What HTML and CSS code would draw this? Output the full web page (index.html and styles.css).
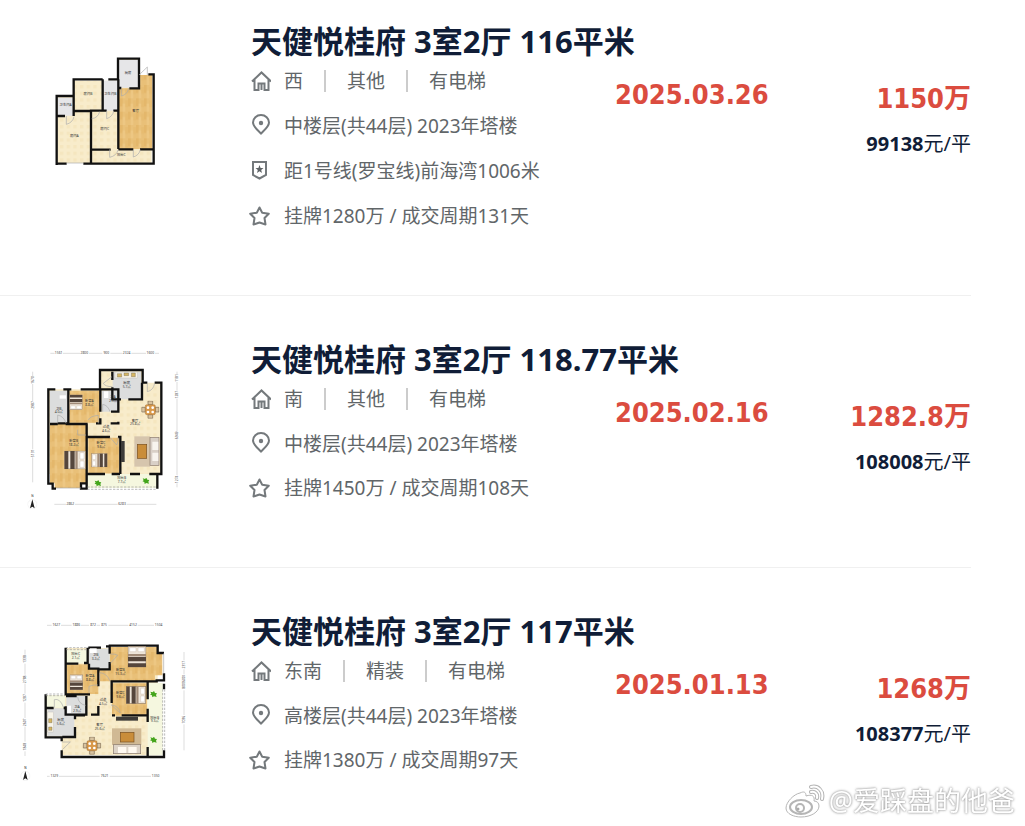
FILE: index.html
```html
<!DOCTYPE html>
<html lang="zh-CN">
<head>
    <meta charset="UTF-8">
    <meta name="viewport" content="width=device-width, initial-scale=1.0">
    <title>天健悦桂府 成交记录</title>
    <link rel="stylesheet" href="styles.css">
</head>
<body>
    <!-- shared icons and floor plan furniture -->
    <svg class="defs" width="0" height="0" aria-hidden="true">
        <defs>
            <pattern id="wood" width="24" height="40" patternUnits="userSpaceOnUse">
                <rect width="24" height="40" fill="#e9c078"/>
                <rect width="8" height="24" fill="#e4b76b"/>
                <rect x="8" y="16" width="8" height="24" fill="#edc783"/>
                <rect x="16" y="6" width="8" height="20" fill="#e7bc71"/>
            </pattern>
            <pattern id="tile" width="20" height="20" patternUnits="userSpaceOnUse">
                <rect width="20" height="20" fill="#f8eccb"/>
                <rect width="10" height="10" fill="#f5e6bf"/>
            </pattern>
            <symbol id="home" viewBox="0 0 22 22">
                <path d="M3 11.5 12.5 2.5 22 11.5M5.5 9.5V20H9.5V13.5H15.5V20H19.5V9.5M12.5 14V20" fill="none" stroke="#74797c" stroke-width="2"/>
            </symbol>
            <symbol id="pin" viewBox="0 0 22 22">
                <path d="M12 19.5C8 15.5 4 12.5 4 8.5A8 7.5 0 0 1 20 8.5C20 12.5 16 15.5 12 19.5Z" fill="none" stroke="#74797c" stroke-width="2"/>
                <circle cx="12" cy="9" r="2.2" fill="#74797c"/>
            </symbol>
            <symbol id="metro" viewBox="0 0 22 22">
                <path d="M4 3H17V16L10.500 19.500 4 16Z" fill="none" stroke="#74797c" stroke-width="2"/>
                <path d="M10.500 6 11.600 9H14.500L12.200 10.900 13 14 10.500 12.200 8 14 8.800 10.900 6.500 9H9.400Z" fill="#5d6265"/>
            </symbol>
            <symbol id="star" viewBox="0 0 22 22">
                <path d="M10.500 3.500 13.200 8.700 19.800 9.700 15.500 14 16.500 20.500 10.500 18.500 4.500 20.500 5.500 14 1.200 9.700 7.800 8.700Z" fill="none" stroke="#74797c" stroke-width="2" stroke-linejoin="round"/>
            </symbol>
            <symbol id="bed" viewBox="0 0 64 56">
                <rect x="1" y="1" width="62" height="54" fill="#eee5d9" stroke="#8c7864" stroke-width="2"/>
                <path d="M1 1H12V55H1ZM18 1H31V55H18Z" fill="#55463c"/>
                <rect x="33" y="1" width="7" height="54" fill="#a18b78"/>
                <path d="M47 6H59V25H47ZM47 31H59V50H47Z" fill="#fff" stroke="#bbaa99"/>
            </symbol>
            <symbol id="table" viewBox="0 0 54 54">
                <path d="M20 1H34V12H20ZM20 42H34V53H20ZM1 20H12V34H1ZM42 20H53V34H42Z" fill="#d8c3a0" stroke="#7a6852" stroke-width="2"/>
                <rect x="12" y="12" width="30" height="30" rx="4" fill="#d9994a" stroke="#8b5c28"/>
                <circle cx="20" cy="21" r="4" fill="#fff"/><circle cx="34" cy="21" r="4" fill="#fff"/>
                <circle cx="20" cy="34" r="4" fill="#fff"/><circle cx="34" cy="34" r="4" fill="#fff"/>
            </symbol>
            <symbol id="plant" viewBox="0 0 22 20">
                <path d="M1 2 8 4 12 0 15 6 21 7 18 12 20 18 12 16 7 19 6 13 0 11 4 8Z" fill="#44a51c"/>
            </symbol>
            <symbol id="north" viewBox="0 0 30 45">
                <text x="15" y="9" font-size="9" text-anchor="middle">N</text>
                <circle cx="15" cy="30" r="14" fill="none" stroke="#ddd"/>
                <path d="M15 15 22 42 15 37 8 42Z" fill="#222"/>
            </symbol>
        </defs>
    </svg>

    <main class="list">
        <article class="item">
            <svg class="plan" viewBox="-75 -69 540 525" role="img" aria-label="户型图">
                <path d="M52 155H102V107H186V107H237V42H297V95H335V354H52Z" fill="url(#tile)"/>
                <path d="M237 130H295V90H337V312H237Z" fill="url(#wood)"/>
                <path d="M237 45H295V128H237ZM188 107H236V197H188ZM54 158H101V212H54Z" fill="#e6e6e8"/>
                <path class="wall" d="M50 360V153H101V103H188M205 103H234V41H297V130H268M80 356H47M130 356H341V88H325M235 103V312M235 129H244M188 103V197H153V312M50 213H75M101 153V213M101 198H153M153 354V314H212M235 313H280M300 313H338M188 197H200M220 197H235"/>
                <path class="door" d="M297 90 322 66V90M244 130V153Q262 149 266 130M200 198V221Q218 215 221 198M155 221Q174 219 179 200M79 213V238Q98 233 102 215M209 313V337Q230 332 234 315M280 314V336Q297 331 301 314M80 354H130"/>
                <g class="label">
                    <text x="264" y="86">厨房</text><text x="144" y="150">房间B</text>
                    <text x="211" y="150">卫生间B</text><text x="77" y="183">卫生间A</text>
                    <text x="287" y="202">客厅</text><text x="194" y="254">房间C</text>
                    <text x="103" y="275">房间A</text><text x="244" y="333">阳台C</text>
                </g>
            </svg>
            <div class="body">
                <h2 class="title">天健悦桂府 3室2厅 116平米</h2>
                <div class="row">
                    <ul class="info">
                        <li><svg class="icon"><use href="#home"/></svg><span class="attrs"><span>西</span><span>其他</span><span>有电梯</span></span></li>
                        <li><svg class="icon"><use href="#pin"/></svg>中楼层(共44层) 2023年塔楼</li>
                        <li class="metro"><svg class="icon"><use href="#metro"/></svg>距1号线(罗宝线)前海湾1006米</li>
                        <li><svg class="icon"><use href="#star"/></svg>挂牌1280万 / 成交周期131天</li>
                    </ul>
                    <div class="deal">
                        <time class="date" datetime="2025-03-26">2025.03.26</time>
                        <div class="price">
                            <div class="total">1150万</div>
                            <div class="unit"><b>99138</b>元/平</div>
                        </div>
                    </div>
                </div>
            </div>
        </article>

        <article class="item">
            <svg class="plan" viewBox="-15 0 540 525" role="img" aria-label="户型图">
                <path d="M86 148H238V90H368V128H423V402H86Z" fill="url(#tile)"/>
                <path d="M202 402H412V444H202Z" fill="#f5f7df"/>
                <path d="M148 152H240V248H148ZM90 252H200V430H183V444H104V430H90ZM205 293H297V400H205Z" fill="url(#wood)"/>
                <path d="M90 152H145V250H90ZM278 95H363V178H278ZM245 152H293V215H245Z" fill="#dcdddd"/>
                <path class="wall" d="M106 148H85V431H98V446H108M130 148H154M145 148V250H112M90 252H113M137 252H203M182 148H240V90H368V128H382M404 128H424V402H412M238 148H295V215H273M277 95V120M277 142V178H303M325 178H366V128M241 150V215M241 235V250H228M295 245V250H272M200 252V446H183V430H198M200 291H270M294 291H301V402M200 402H255M275 402H300M330 402H360M388 402H412V446"/>
                <path class="dash" d="M202 441H410M202 448H410"/>
                <path class="door" d="M382 130V155Q400 151 404 130M250 130 276 110M250 130Q255 140 277 140M248 215V193Q264 196 270 215M113 250V225Q132 229 138 250M205 240Q210 228 235 226V250M270 292 290 315Q296 305 294 292M173 269V285H198M108 444H183"/>
                <rect x="285" y="96" width="68" height="18" fill="#f8f4e8" stroke="#aaa"/>
                <path d="M292 101H305V111H292ZM312 99H326V107H312ZM334 99H346V110H334Z" fill="#d6b663" stroke="#555"/>
                <rect x="119" y="166" width="19" height="10" fill="#fff"/><rect x="252" y="154" width="13" height="20" fill="#fff"/>
                <use href="#bed" transform="rotate(90 169 187)" x="134" y="168" width="70" height="40"/>
                <use href="#bed" x="132" y="332" width="66" height="56"/>
                <use href="#bed" transform="rotate(180 238 362)" x="205" y="342" width="66" height="42"/>
                <use href="#table" x="364" y="182" width="54" height="54"/>
                <rect x="343" y="289" width="47" height="91" fill="#d6c5ad"/><rect x="352" y="313" width="28" height="42" fill="#c98d3a" stroke="#785022" stroke-width="2"/>
                <rect x="390" y="292" width="27" height="84" fill="#d9d0c7" stroke="#89796c" stroke-width="2"/><path d="M397 305H415V330H397ZM397 338H415V363H397Z" fill="#f8f4ee"/>
                <rect x="303" y="303" width="11" height="63" fill="#3e3c39"/>
                <use href="#plant" x="223" y="420" width="22" height="20"/><use href="#plant" x="367" y="413" width="22" height="20"/>
                <g class="label">
                    <text x="116" y="209">卫B</text><text x="116" y="219">4.0㎡</text>
                    <text x="208" y="187">卧室A</text><text x="208" y="197">8.8㎡</text>
                    <text x="320" y="132">厨房</text><text x="320" y="143">5.7㎡</text>
                    <text x="279" y="174">卫A</text><text x="279" y="185">2.9㎡</text>
                    <text x="345" y="245">客厅</text><text x="345" y="256">25.8㎡</text>
                    <text x="258" y="265">过道</text><text x="258" y="275">4.6㎡</text>
                    <text x="161" y="307">卧室B</text><text x="161" y="318">18.2㎡</text>
                    <text x="243" y="313">卧室C</text><text x="243" y="323">9.6㎡</text>
                    <text x="305" y="418">阳台B</text><text x="305" y="429">7.7㎡</text>
                </g>
                <path class="measure" d="M91 40H104M129 40H180M207 40H247M271 40H307M334 40H378M405 40H417M38 95V108M38 132V183M38 207V328M38 352V427M471 95V102M471 126V152M471 176V274M471 298V405M471 430V442M103 493H138M165 493H293M320 493H409"/>
                <g class="size">
                    <text x="116" y="43">1561</text><text x="193" y="43">2800</text><text x="259" y="43">900</text><text x="320" y="43">2324</text><text x="391" y="43">1600</text>
                    <text x="151" y="496">2862</text><text x="306" y="496">6283</text>
                    <text transform="translate(41 120) rotate(-90)">1670</text><text transform="translate(41 195) rotate(-90)">2987</text><text transform="translate(41 340) rotate(-90)">5131</text>
                    <text transform="translate(474 114) rotate(-90)">1181</text><text transform="translate(474 164) rotate(-90)">1287</text><text transform="translate(474 286) rotate(-90)">6949</text><text transform="translate(474 418) rotate(-90)">1274</text>
                </g>
                <use href="#north" x="22" y="463" width="30" height="45"/>
            </svg>
            <div class="body">
                <h2 class="title">天健悦桂府 3室2厅 118.77平米</h2>
                <div class="row">
                    <ul class="info">
                        <li><svg class="icon"><use href="#home"/></svg><span class="attrs"><span>南</span><span>其他</span><span>有电梯</span></span></li>
                        <li><svg class="icon"><use href="#pin"/></svg>中楼层(共44层) 2023年塔楼</li>
                        <li><svg class="icon"><use href="#star"/></svg>挂牌1450万 / 成交周期108天</li>
                    </ul>
                    <div class="deal">
                        <time class="date" datetime="2025-02-16">2025.02.16</time>
                        <div class="price">
                            <div class="total">1282.8万</div>
                            <div class="unit"><b>108008</b>元/平</div>
                        </div>
                    </div>
                </div>
            </div>
        </article>

        <article class="item">
            <svg class="plan" viewBox="0 0 540 525" role="img" aria-label="户型图">
                <path d="M152 108H428V430H140V375H95V250H152Z" fill="url(#tile)"/>
                <path d="M398 213H443V430H398ZM153 113H217V154H153ZM92 250H150V287H92Z" fill="#f5f7df"/>
                <path d="M285 105H428V124H442V190H420V208H252V175H285ZM155 157H250V246H155ZM291 214H396V311H291Z" fill="url(#wood)"/>
                <path d="M221 110H284V170H221ZM154 252H213V307H154ZM97 289H178V373H97Z" fill="#dcdddd"/>
                <path class="wall" d="M152 107V247H225M218 107V153H207M152 155H190M220 107H258M273 103H285M281 101H428V123H447M447 184V205H425V208H290V273M284 103V125M284 150V172H253V175M222 155V170H250V223M250 210H253M398 210V262M398 290V310H320M291 310H300M250 282V308H228M214 252V308H152V283M153 252H185M92 247V376H140V388M92 288H116M146 288H152M180 310H210M180 308V322M180 345V375H142M140 415V435H447V415M398 310V330M398 405V434M447 215V232"/>
                <path class="dash" d="M152 107H216M153 113H216M92 246H150M92 251H150M443 232V415M449 232V415"/>
                <path class="door" d="M286 154 308 130Q302 125 286 126M254 207V182Q275 183 285 207M222 243V223Q235 218 249 219M188 254Q190 276 212 280M289 279 314 302M289 279Q310 280 316 303M118 287V263Q135 258 145 285M142 413 166 390H142M446 124V184"/>
                <use href="#bed" transform="rotate(-90 366 134)" x="333" y="106" width="66" height="56"/>
                <use href="#bed" transform="rotate(-90 185 211)" x="150" y="190" width="70" height="40"/>
                <use href="#bed" x="333" y="217" width="60" height="64"/>
                <use href="#table" x="202" y="374" width="58" height="54"/>
                <rect x="291" y="349" width="88" height="50" fill="#d0b994"/><rect x="316" y="361" width="41" height="29" fill="#c98d3a" stroke="#785022" stroke-width="2"/>
                <rect x="295" y="398" width="82" height="27" fill="#ddd3c7" stroke="#89796c" stroke-width="2"/><path d="M309 405H334V423H309ZM340 405H365V423H340Z" fill="#fff9f0"/>
                <rect x="303" y="314" width="66" height="12" fill="#3e3c39"/>
                <rect x="98" y="300" width="18" height="60" fill="#f8f4e8" stroke="#aaa"/><path d="M101 320H111V332H101ZM101 345H111V355H101Z" fill="#d6b663" stroke="#555"/>
                <rect x="157" y="281" width="11" height="22" fill="#fff"/><rect x="225" y="109" width="20" height="14" fill="#fff"/>
                <use href="#plant" x="405" y="237" width="22" height="20"/><use href="#plant" x="405" y="374" width="22" height="20"/>
                <g class="label">
                    <text x="182" y="130">阳台C</text><text x="182" y="141">2.1㎡</text>
                    <text x="242" y="133">卫B</text><text x="242" y="144">3.2㎡</text>
                    <text x="316" y="177">卧室B</text><text x="316" y="188">15.3㎡</text>
                    <text x="225" y="195">卧室A</text><text x="225" y="206">8.8㎡</text>
                    <text x="316" y="246">卧室C</text><text x="316" y="257">9.6㎡</text>
                    <text x="264" y="267">过道</text><text x="264" y="278">4.5㎡</text>
                    <text x="186" y="288">卫A</text><text x="186" y="299">2.9㎡</text>
                    <text x="137" y="328">厨房</text><text x="137" y="339">5.6㎡</text>
                    <text x="254" y="343">客厅</text><text x="254" y="354">25.6㎡</text>
                    <text x="419" y="320">阳台B</text><text x="419" y="331">9.3㎡</text>
                </g>
                <path class="measure" d="M96 40H110M138 40H170M198 40H222M245 40H255M280 40H340M368 40H417M30 113V128M30 155V188M30 215V245M30 272V318M30 344V389M30 418V432M507 120V145M507 172V187M507 235V309M507 337V415M96 493H104M132 493H254M284 493H408"/>
                <g class="size">
                    <text x="124" y="43">1627</text><text x="184" y="43">1886</text><text x="234" y="43">872</text><text x="267" y="43">875</text><text x="354" y="43">4152</text><text x="431" y="43">1504</text>
                    <text x="118" y="496">1329</text><text x="269" y="496">7621</text><text x="422" y="496">1350</text>
                    <text transform="translate(33 141) rotate(-90)">1338</text><text transform="translate(33 202) rotate(-90)">2788</text><text transform="translate(33 258) rotate(-90)">1287</text><text transform="translate(33 331) rotate(-90)">2607</text><text transform="translate(33 404) rotate(-90)">1848</text>
                    <text transform="translate(510 158) rotate(-90)">2317</text><text transform="translate(510 210) rotate(-90)">800(600)</text><text transform="translate(510 323) rotate(-90)">7036</text>
                </g>
                <use href="#north" x="16" y="462" width="30" height="45"/>
            </svg>
            <div class="body">
                <h2 class="title">天健悦桂府 3室2厅 117平米</h2>
                <div class="row">
                    <ul class="info">
                        <li><svg class="icon"><use href="#home"/></svg><span class="attrs"><span>东南</span><span>精装</span><span>有电梯</span></span></li>
                        <li><svg class="icon"><use href="#pin"/></svg>高楼层(共44层) 2023年塔楼</li>
                        <li><svg class="icon"><use href="#star"/></svg>挂牌1380万 / 成交周期97天</li>
                    </ul>
                    <div class="deal">
                        <time class="date" datetime="2025-01-13">2025.01.13</time>
                        <div class="price">
                            <div class="total">1268万</div>
                            <div class="unit"><b>108377</b>元/平</div>
                        </div>
                    </div>
                </div>
            </div>
        </article>
    </main>

    <div class="watermark">
        <svg class="weibo" viewBox="0 0 40 34" aria-hidden="true">
            <path d="M15 9C9 10 1 18 1 24 1 30 9 33 16 33 26 33 34 28 34 22 34 19 32 17 29 17 30 12 27 10 21 12 21 8 19 7 15 9Z" fill="#fff" stroke="#b5b5b5"/>
            <ellipse cx="16" cy="23" rx="11" ry="7" fill="#fff" stroke="#b5b5b5" stroke-width="2"/>
            <circle cx="15" cy="24" r="4" fill="none" stroke="#b5b5b5" stroke-width="2"/>
            <circle cx="13" cy="25" r="1.500" fill="#aaa"/>
            <path d="M26 3C33 1 39 7 37 15M26 8C30 7 33 10 32 14" fill="none" stroke="#b5b5b5" stroke-width="4" stroke-linecap="round"/>
            <path d="M26 3C33 1 39 7 37 15M26 8C30 7 33 10 32 14" fill="none" stroke="#fff" stroke-width="2" stroke-linecap="round"/>
        </svg>
        <span>@爱踩盘的他爸</span>
    </div>
</body>
</html>
```
FILE: styles.css
```css
body {
    font-family: "Noto Sans", "Noto Sans CJK SC", sans-serif;
    background-color: #ffffff;
    color: #101d37;
    margin: 0;
}

.defs {
    position: absolute;
}

.list {
    margin-right: 54px;
}

.item {
    display: flex;
    align-items: flex-start;
    padding: 44px 0 52px;
    border-bottom: 1px solid #f0f0f0;
}

.item:first-child {
    padding-top: 22px;
}

.item:last-child {
    padding-bottom: 20px;
    border-bottom: none;
}

/* floor plan */
.plan {
    flex: none;
    width: 180px;
    height: 175px;
    margin: 0 54px 0 15px;
}

.wall {
    fill: none;
    stroke: #111;
    stroke-width: 7px;
}

.door {
    fill: none;
    stroke: #aaa;
    stroke-width: 2px;
}

.dash {
    fill: none;
    stroke: #999;
    stroke-width: 2px;
    stroke-dasharray: 7 4;
}

.measure {
    fill: none;
    stroke: #ccc;
    stroke-width: 2px;
}

.label,
.size {
    font-size: 10px;
    text-anchor: middle;
    fill: #333;
}

.size {
    fill: #444;
}

/* listing text */
.body {
    flex: 1;
    min-width: 0;
    padding: 2px 0 6px;
}

.title {
    margin: 0;
    padding-left: 2px;
    font-size: 31px;
    line-height: 35px;
    font-weight: 700;
    white-space: nowrap;
}

.row {
    display: flex;
    justify-content: space-between;
}

.info {
    list-style: none;
    margin: 0;
    padding: 0;
    color: #616669;
    font-size: 19px;
}

.info li {
    display: flex;
    align-items: center;
    gap: 13px;
    height: 44px;
    white-space: nowrap;
}

.info .metro {
    height: 46px;
}

.icon {
    flex: none;
    width: 22px;
    height: 22px;
}

.attrs {
    display: flex;
    line-height: 22px;
}

.attrs span + span {
    margin-left: 21px;
    padding-left: 21px;
    border-left: 2px solid #ccc;
}

.deal {
    display: flex;
    justify-content: space-between;
    width: 356px;
    white-space: nowrap;
}

.date,
.total {
    font-family: "DejaVu Sans Condensed", "Noto Sans CJK SC", sans-serif;
    font-size: 27px;
    line-height: 36px;
    font-weight: 700;
    color: #db4c3f;
}

.date {
    padding-top: 18px;
}

.price {
    padding-top: 22px;
    text-align: right;
}

.unit {
    margin-top: 12px;
    font-size: 20px;
    line-height: 30px;
}

.watermark {
    position: fixed;
    right: 10px;
    bottom: 8px;
    display: flex;
    align-items: center;
    gap: 4px;
    color: #fff;
    font-size: 27px;
    line-height: 34px;
    text-shadow: 0 0 2px #999, 0 0 3px #aaa;
}

.weibo {
    width: 40px;
    height: 34px;
}
```
